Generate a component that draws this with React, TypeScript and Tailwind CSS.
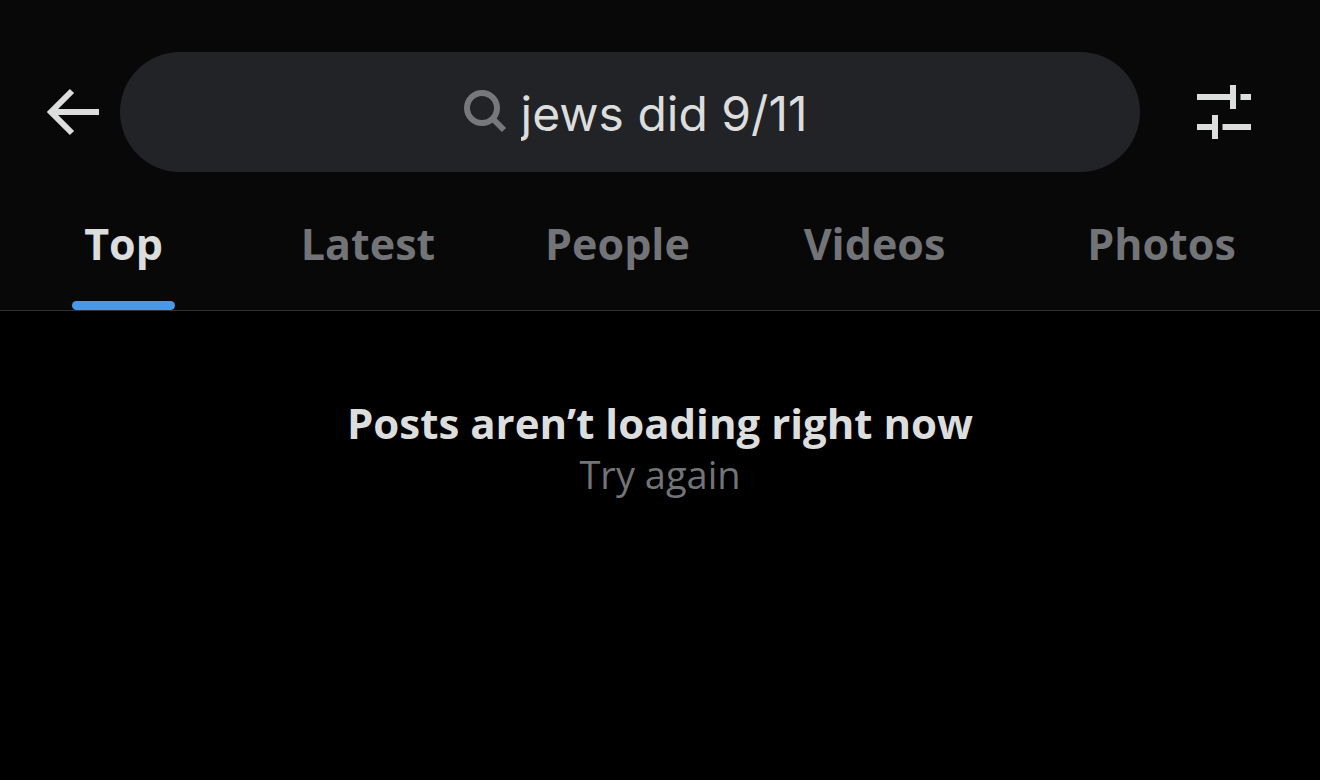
import { useState } from "react";

const tabs = [
  { label: "Top", cell: "w-[247px]" },
  { label: "Latest", cell: "w-[242px]" },
  { label: "People", cell: "w-[257px]" },
  { label: "Videos", cell: "w-[257px]" },
  { label: "Photos", cell: "flex-1" },
];

function BackIcon() {
  return (
    <svg width="54" height="48" viewBox="0 0 54 48" fill="none" stroke="#dcdddd" strokeWidth="6" aria-hidden="true">
      <path d="M26 3 5 24l21 21M5 24h48" />
    </svg>
  );
}

function SearchIcon() {
  return (
    <svg width="44" height="44" viewBox="0 0 44 44" fill="none" stroke="#77787c" strokeWidth="6" aria-hidden="true">
      <circle cx="19" cy="18" r="15" />
      <path d="M29.5 28.5 41 40" />
    </svg>
  );
}

function FilterIcon() {
  return (
    <svg width="54" height="54" viewBox="0 0 54 54" fill="none" stroke="#dcdddd" strokeWidth="6" aria-hidden="true">
      <path d="M0 12h36M36 0v24M43.5 12H54M0 42h18M18 30v24M25.5 42H54" />
    </svg>
  );
}

export default function App() {
  const [query, setQuery] = useState("jews did 9/11");
  const [active, setActive] = useState("Top");

  return (
    <div className="min-h-screen bg-black font-['Open_Sans','Noto_Sans',sans-serif] text-[#dcdddd]">
      <header className="border-b border-[#2f3133] bg-[#080808] pt-[52px]">
        <div className="flex items-center pr-[69px] pl-[46px]">
          <button type="button" aria-label="Back" className="w-[74px] shrink-0">
            <BackIcon />
          </button>
          <label className="flex h-[120px] flex-1 items-center justify-center gap-3.5 rounded-full bg-[#222327] pl-2.5">
            <SearchIcon />
            <input
              type="text"
              aria-label="Search"
              value={query}
              onChange={(e) => setQuery(e.target.value)}
              className="field-sizing-content bg-transparent pt-1 font-['Inter',sans-serif] text-[48px] outline-none"
            />
          </label>
          <button type="button" aria-label="Search filters" className="ml-[57px] shrink-0">
            <FilterIcon />
          </button>
        </div>
        <nav className="flex h-[138px]">
          {tabs.map(({ label, cell }) => (
            <button
              key={label}
              type="button"
              onClick={() => setActive(label)}
              className={`flex flex-col items-center justify-between pt-[42px] text-[43px] leading-[60px] font-bold ${cell} ${active === label ? "" : "text-[#727477]"}`}
            >
              {label}
              <span className={`h-[9px] w-[103px] rounded-full ${active === label ? "bg-[#4a99e9]" : ""}`} />
            </button>
          ))}
        </nav>
      </header>
      <main className="flex flex-col items-center pt-[84px]">
        <h1 className="text-[42px] leading-[56px] font-bold">Posts aren’t loading right now</h1>
        <button type="button" className="text-[38px] leading-[46px] text-[#727477]">
          Try again
        </button>
      </main>
    </div>
  );
}
